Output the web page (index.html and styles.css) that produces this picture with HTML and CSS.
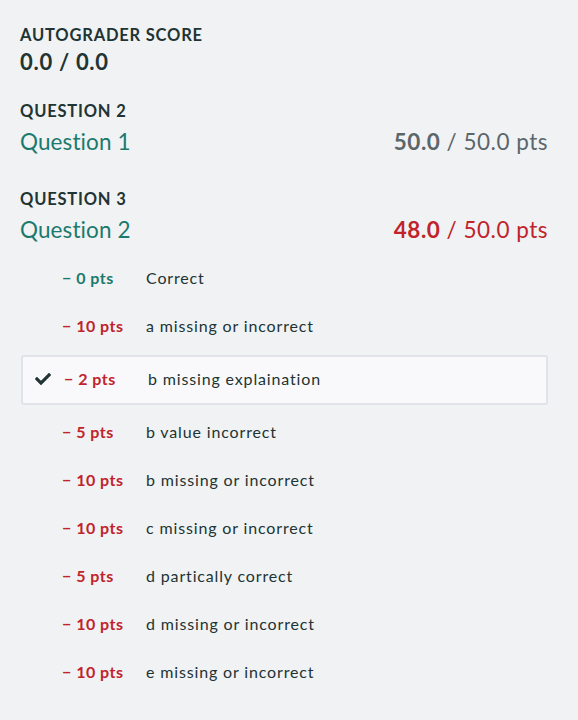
FILE: index.html
```html
<!DOCTYPE html>
<html>
<head>
<meta charset="utf-8">
<link rel="stylesheet" href="styles.css">
</head>
<body>
<div class="page">
  <section class="block first">
    <div class="label">AUTOGRADER SCORE</div>
    <div class="total">0.0 / 0.0</div>
  </section>

  <section class="block second">
    <div class="label">QUESTION 2</div>
    <div class="qrow">
      <span class="qtitle">Question 1</span>
      <span class="qscore"><b>50.0</b> / 50.0 pts</span>
    </div>
  </section>

  <section class="block">
    <div class="label">QUESTION 3</div>
    <div class="qrow">
      <span class="qtitle">Question 2</span>
      <span class="qscore red"><b>48.0</b> / 50.0 pts</span>
    </div>
    <ul class="rubric">
      <li class="item"><span class="check"></span><span class="pts teal">− 0 pts</span><span class="desc">Correct</span></li>
      <li class="item"><span class="check"></span><span class="pts">− 10 pts</span><span class="desc">a missing or incorrect</span></li>
      <li class="item selected"><span class="check"><svg viewBox="0 64 512 384" width="16" height="12"><path fill="currentColor" d="M173.898 439.404l-166.4-166.4c-9.997-9.997-9.997-26.206 0-36.204l36.203-36.204c9.997-9.998 26.207-9.998 36.204 0L192 312.69 432.095 72.596c9.997-9.997 26.207-9.997 36.204 0l36.203 36.204c9.997 9.997 9.997 26.206 0 36.204l-294.4 294.401c-9.998 9.997-26.207 9.997-36.204-.001z"/></svg></span><span class="pts">− 2 pts</span><span class="desc">b missing explaination</span></li>
      <li class="item"><span class="check"></span><span class="pts">− 5 pts</span><span class="desc">b value incorrect</span></li>
      <li class="item"><span class="check"></span><span class="pts">− 10 pts</span><span class="desc">b missing or incorrect</span></li>
      <li class="item"><span class="check"></span><span class="pts">− 10 pts</span><span class="desc">c missing or incorrect</span></li>
      <li class="item"><span class="check"></span><span class="pts">− 5 pts</span><span class="desc">d partically correct</span></li>
      <li class="item"><span class="check"></span><span class="pts">− 10 pts</span><span class="desc">d missing or incorrect</span></li>
      <li class="item"><span class="check"></span><span class="pts">− 10 pts</span><span class="desc">e missing or incorrect</span></li>
    </ul>
  </section>
</div>
</body>
</html>
```

FILE: styles.css
```css
html, body {
  margin: 0;
  padding: 0;
  background: #f1f2f4;
}
body {
  font-family: "Lato", "Liberation Sans", sans-serif;
  color: #213433;
  font-variant-ligatures: none;
}
.page {
  padding: 24px 30px 0 20px;
}
.block.first {
  margin-bottom: 25px;
}
.block.second {
  margin-bottom: 31px;
}
.label {
  font-size: 16.5px;
  font-weight: 700;
  line-height: 22px;
  letter-spacing: 0.8px;
}
.total {
  font-size: 22px;
  font-weight: 700;
  line-height: 26px;
  margin-top: 3px;
  letter-spacing: 0.7px;
}
.qrow {
  display: flex;
  justify-content: space-between;
  align-items: baseline;
  margin-top: 5px;
  line-height: 30px;
}
.qtitle {
  font-size: 22.5px;
  color: #1b7a6d;
  letter-spacing: 0.1px;
}
.qscore {
  font-size: 22.5px;
  color: #5b666b;
  letter-spacing: 0.5px;
}
.qscore b {
  font-weight: 700;
}
.qscore.red {
  color: #c0232a;
}
.rubric {
  list-style: none;
  margin: 8px 0 0 1px;
  padding: 0;
}
.item {
  display: flex;
  align-items: center;
  height: 48px;
  border: 2px solid transparent;
  box-sizing: border-box;
  border-radius: 3px;
  font-size: 16px;
  padding-left: 12px;
}
.item.selected {
  height: 50px;
  margin: 6px 0 2px;
  background: #f9f9fb;
  border-color: #e2e3e8;
  padding-bottom: 3px;
}
.check {
  width: 27px;
  flex: none;
  display: flex;
  align-items: center;
  color: #213433;
}
.item.selected .check {
  width: 29px;
}
.pts {
  width: 84px;
  flex: none;
  font-weight: 700;
  color: #c0232a;
  letter-spacing: 0.5px;
}
.pts.teal {
  color: #1b7a6d;
}
.desc {
  color: #213433;
  letter-spacing: 0.85px;
}
```
